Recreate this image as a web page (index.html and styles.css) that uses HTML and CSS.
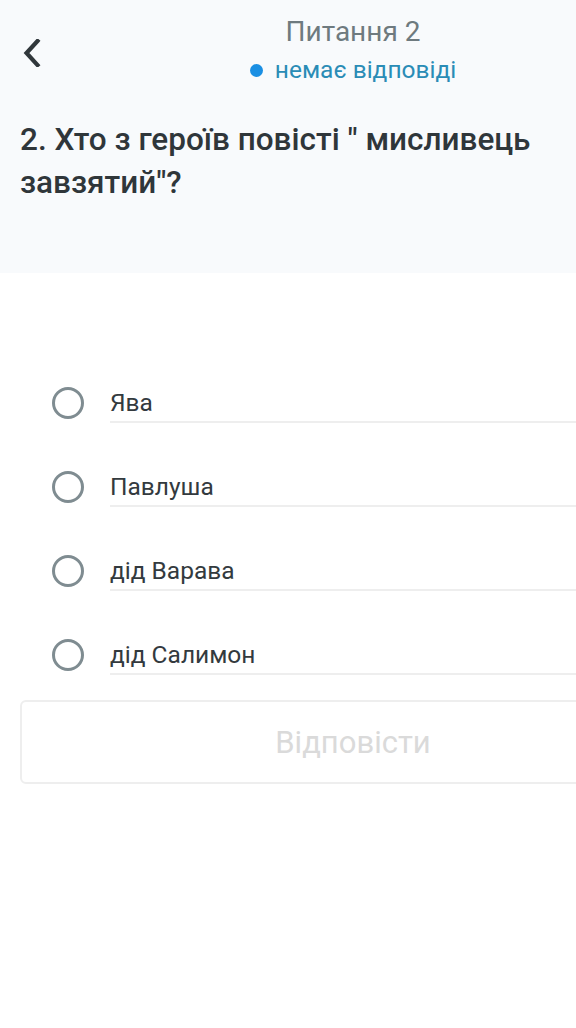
FILE: index.html
```html
<!DOCTYPE html>
<html lang="uk">
<head>
<meta charset="utf-8">
<link rel="stylesheet" href="styles.css">
</head>
<body>
<div class="page">
  <header class="header">
    <div class="nav">
      <div class="back">
        <svg width="20" height="28" viewBox="0 0 20 28"><path d="M15.5 2 L4.5 14 L15.5 26" fill="none" stroke="#30373b" stroke-width="4.2" stroke-linecap="square"/></svg>
      </div>
      <div class="title-block">
        <div class="title">Питання 2</div>
        <div class="status"><span class="dot"></span>немає відповіді</div>
      </div>
      <div></div>
    </div>
    <h1 class="question">2. Хто з героїв повісті " мисливець завзятий"?</h1>
  </header>
  <main class="options">
    <div class="option"><span class="radio"></span><span class="label">Ява</span></div>
    <div class="option"><span class="radio"></span><span class="label">Павлуша</span></div>
    <div class="option"><span class="radio"></span><span class="label">дід Варава</span></div>
    <div class="option"><span class="radio"></span><span class="label">дід Салимон</span></div>
  </main>
  <div class="actions">
    <button class="answer">Відповісти</button>
  </div>
</div>
</body>
</html>
```
FILE: styles.css
```css
html, body {
  margin: 0;
  padding: 0;
  background: #ffffff;
  overflow: hidden;
}
body {
  font-family: Roboto, "Noto Sans", sans-serif;
}
.page {
  width: 706px;
}
.header {
  background: #f8fafc;
  padding: 15px 20px 69px 20px;
}
.nav {
  display: grid;
  grid-template-columns: 1fr auto 1fr;
}
.back {
  align-self: center;
  margin-top: 6px;
  margin-left: 2px;
  display: flex;
}
.title-block {
  display: flex;
  flex-direction: column;
  align-items: center;
}
.title {
  font-size: 28px;
  line-height: 34px;
  color: #6e7a7f;
}
.status {
  margin-top: 7px;
  font-size: 24.5px;
  line-height: 28px;
  color: #2a8cb6;
  display: flex;
  align-items: center;
}
.dot {
  width: 13px;
  height: 13px;
  border-radius: 50%;
  background: #1a8fe3;
  margin-right: 12px;
  margin-top: 1px;
}
.question {
  margin: 34px 0 0 0;
  font-size: 31.5px;
  line-height: 43px;
  font-weight: 500;
  color: #2f363a;
  width: 560px;
}
.options {
  margin-top: 112px;
  display: flex;
  flex-direction: column;
  gap: 46px;
}
.option {
  display: flex;
  align-items: flex-start;
}
.radio {
  width: 26px;
  height: 26px;
  border: 3px solid #7f8c91;
  border-radius: 50%;
  margin: 2px 26px 0 52px;
  flex: none;
}
.label {
  flex: 1;
  font-size: 24.5px;
  line-height: 26px;
  padding: 5px 0;
  color: #333a3e;
  border-bottom: 2px solid #eeeeee;
}
.actions {
  padding: 25px 20px 0 20px;
}
.answer {
  width: 100%;
  height: 84px;
  background: #ffffff;
  border: 2px solid #eeeeee;
  border-radius: 6px;
  font-family: Roboto, "Noto Sans", sans-serif;
  font-size: 31px;
  color: #dadada;
}
```
